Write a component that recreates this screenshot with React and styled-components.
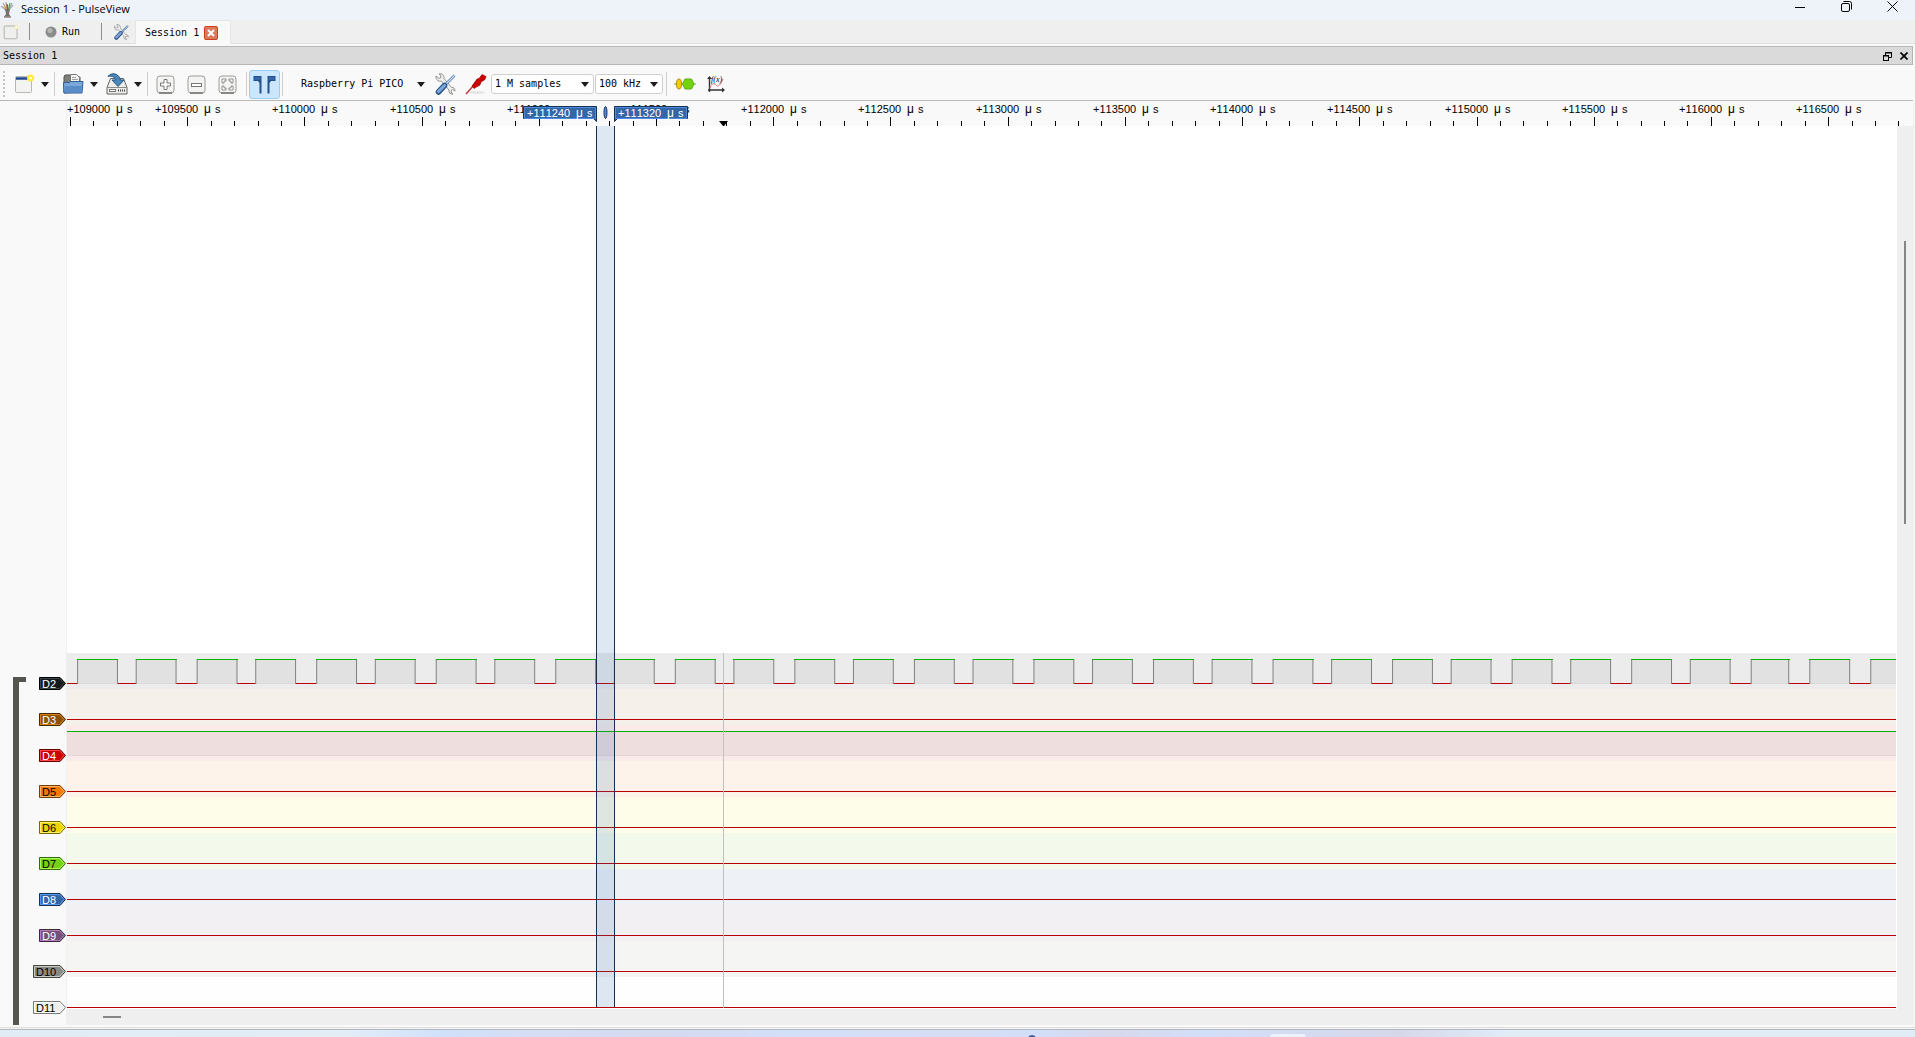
import styled, { createGlobalStyle } from "styled-components";

const GlobalStyle = createGlobalStyle`
    * {
        box-sizing: border-box;
    }
    body {
        margin: 0;
        background: #f9f9f9;
        color: #000;
        font: 10px/12px "DejaVu Sans Mono", "Liberation Mono", monospace;
    }
    button, select {
        font: inherit;
        color: inherit;
        border: 0;
        background: none;
        padding: 0;
        margin: 0;
    }
    svg {
        display: block;
        flex: none;
    }
`;

const Window = styled.div`
    display: flex;
    flex-direction: column;
    min-height: 100vh;
`;

const TitleBar = styled.header`
    display: flex;
    align-items: center;
    height: 20px;
    background: #eef3fa;
`;
const AppTitle = styled.h1`
    flex: 1;
    margin: 0;
    padding: 0 0 3px 5px;
    font: 11px/16px "Open Sans", "Noto Sans", sans-serif;
`;
const WindowButton = styled.button`
    display: flex;
    justify-content: center;
    width: 46px;
    height: 20px;
    padding-top: 1px;
`;

const TabBar = styled.div`
    display: flex;
    align-items: center;
    height: 24px;
    background: #efefef;
    border-bottom: 1px solid #dedede;
`;
const BarButton = styled.button`
    display: flex;
    align-items: center;
    justify-content: ${({ $start }) => ($start ? "flex-start" : "center")};
    gap: 5px;
    width: ${({ $width }) => $width}px;
    height: 23px;
    padding: 1px 0 0 ${({ $start }) => $start || 0}px;
`;
const BarLine = styled.span`
    width: 1px;
    height: 17px;
    background: #8c8c8c;
`;
const Tab = styled.div`
    display: flex;
    align-items: center;
    gap: 5px;
    height: 24px;
    padding: 1px 12px 0 9px;
    background: #f9f9f9;
    border: 1px solid #e6e6e6;
    border-bottom: 0;
`;
const TabClose = styled.button`
    display: flex;
    align-items: center;
    justify-content: center;
    width: 14px;
    height: 14px;
    border: 1px solid #d03c1c;
    border-radius: 2px;
    background: #dc7a5c;
`;

const DockTitle = styled.div`
    display: flex;
    align-items: center;
    gap: 8px;
    height: 19px;
    margin: 2px 2px 0 0;
    padding: 1px 4px 0 3px;
    background: #dadada;
    border: solid #b6b6b6;
    border-width: 1px 1px 1px 0;
`;
const DockName = styled.h2`
    flex: 1;
    margin: 0;
    font: inherit;
`;

const Toolbar = styled.div`
    display: flex;
    align-items: center;
    height: 36px;
    margin-right: 2px;
    padding: 3px 0 0 3px;
    border-bottom: 1px solid #b8b8b8;
`;
const Grip = styled.span`
    width: 2px;
    height: 26px;
    margin-right: 3px;
    background: repeating-linear-gradient(#c4c4c4 0 2px, transparent 2px 4px);
`;
const ToolLine = styled.span`
    width: 1px;
    height: 24px;
    margin: 0 2px;
    background: #cfcfcf;
`;
const MenuButton = styled.button`
    display: flex;
    align-items: center;
    gap: 5px;
    width: 44px;
    height: 30px;
    padding: 0 4px;
`;
const IconSlot = styled.span`
    display: flex;
    flex: none;
    justify-content: center;
    width: 24px;
`;
const ToolButton = styled.button`
    display: flex;
    align-items: center;
    justify-content: center;
    width: 31px;
    height: 29px;
    border: 1px solid ${({ $on }) => ($on ? "#99cef5" : "transparent")};
    border-radius: 3px;
    background: ${({ $on }) => ($on ? "#cce6fd" : "none")};
`;
const ToolGroup = styled.div`
    display: flex;
    margin-right: 1px;
`;
const DeviceButton = styled.button`
    display: flex;
    align-items: center;
    justify-content: space-between;
    width: 144px;
    height: 30px;
    padding: 0 4px 0 16px;
`;
const SelectBox = styled.div`
    display: grid;
    align-items: center;
    width: ${({ $width }) => $width}px;
    margin-right: 1px;
    > * {
        grid-area: 1 / 1;
    }
    > svg {
        justify-self: end;
        margin-right: 5px;
        pointer-events: none;
    }
`;
const Select = styled.select`
    appearance: none;
    height: 20px;
    padding-left: 3px;
    background: #fff;
    border: 1px solid #cfcfcf;
    border-radius: 3px;
`;

const Workspace = styled.main`
    display: flex;
    flex: 1;
    margin-right: 1px;
    border-right: 1px solid #f0f0f0;
`;
const HeaderPane = styled.div`
    display: flex;
    align-items: flex-end;
    width: 67px;
    padding-left: 13px;
    border-right: 1px solid #f0f0f0;
`;
const Group = styled.div`
    display: flex;
    flex: 1;
    justify-content: space-between;
`;
const Bracket = styled.div`
    width: 13px;
    margin-top: 24px;
    border: solid #555550;
    border-width: 5px 0 0 6px;
`;
const Labels = styled.div`
    padding-bottom: 16px;
`;
const LabelRow = styled.div`
    display: flex;
    justify-content: flex-end;
    height: ${({ $last }) => ($last ? 32 : 36)}px;
    padding-top: 24px;
`;
const LabelSvg = styled.svg`
    font: 11px "Liberation Sans", Arial, sans-serif;
`;
const ViewPane = styled.div`
    display: flex;
    flex-direction: column;
    flex: 1;
    min-width: 0;
`;
const RulerSvg = styled.svg`
    width: 100%;
    height: 25px;
    font: 11px "Liberation Sans", Arial, sans-serif;
    font-kerning: none;
`;
const Main = styled.div`
    display: flex;
    flex: 1;
`;
const Canvas = styled.div`
    position: relative;
    display: flex;
    flex: 1;
    flex-direction: column;
    justify-content: flex-end;
    min-width: 0;
    padding-right: 1px;
    background: #fff;
    overflow: hidden;
`;
const TraceRow = styled.div`
    height: ${({ $last }) => ($last ? 32 : 36)}px;
    padding-top: ${({ $high }) => ($high ? 6 : 30)}px;
    background: ${({ $bg }) => $bg};
`;
const Level = styled.div`
    height: ${({ $high }) => ($high ? 25 : 1)}px;
    background: ${({ $high }) => ($high ? "rgba(0, 0, 0, 0.05)" : "#b80000")};
    border-top: ${({ $high }) => ($high ? "1px solid #00b400" : "0")};
    border-bottom: ${({ $high }) => ($high ? "1px solid #e3d7d7" : "0")};
`;
const Wave = styled.svg`
    width: 100%;
    height: 25px;
`;
const CursorBand = styled.div`
    position: absolute;
    top: 0;
    bottom: 2px;
    left: 529px;
    width: 19px;
    background: rgba(52, 112, 180, 0.16);
    border: solid #17304f;
    border-width: 0 1px;
`;
const HoverLine = styled.div`
    position: absolute;
    bottom: 1px;
    left: 656px;
    width: 1px;
    height: 355px;
    background: #c0c0c0;
`;
const VScroll = styled.div`
    width: 16px;
    padding: 115px 7px 0;
    background: #efefef;
`;
const HScroll = styled.div`
    height: 16px;
    padding: 7px 0 0 36px;
    background: #efefef;
`;
const Thumb = styled.div`
    width: ${({ $vertical }) => ($vertical ? 2 : 18)}px;
    height: ${({ $vertical }) => ($vertical ? 283 : 2)}px;
    background: #858585;
`;

const StatusEdge = styled.div`
    height: 5px;
    border-bottom: 1px solid #b2b6be;
    background: linear-gradient(#f9f9f9 2px, #dedede 2px 3px, #f4f4f4 3px);
`;
const Taskbar = styled.footer`
    position: relative;
    height: 7px;
    overflow: hidden;
    background: linear-gradient(90deg, #e0edf7 0, #e2edf6 18%, #d0e1fb 23%, #d6def5 28%, #d4daf0 35%, #d3e0fa 41%, #d6def5 50%, #d2dffa 54%, #d7d9ec 58%, #d2dffa 63%, #d6d8ea 73%, #e0edf7 79%, #e0ecf6 100%);
`;
const TaskTile = styled.span`
    position: absolute;
    top: 4px;
    left: 66.3%;
    width: 36px;
    height: 10px;
    border-radius: 4px;
    background: #edf2fb;
`;
const TaskDot = styled.span`
    position: absolute;
    top: 5px;
    left: 53.7%;
    width: 8px;
    height: 8px;
    border-radius: 50%;
    background: #41639a;
`;

const channels = [
    { name: "D2", color: "#16191a", edge: "#000", light: "#3b4446", text: "#fff", bg: "#ececec", wave: true },
    { name: "D3", color: "#8f5202", edge: "#472901", light: "#d98213", text: "#fff", bg: "#f6f0ea" },
    { name: "D4", color: "#cc0000", edge: "#660000", light: "#ff4a4a", text: "#fff", bg: "#fbeaea", high: true },
    { name: "D5", color: "#f57900", edge: "#7a3c00", light: "#ffb469", text: "#000", bg: "#fef3ea" },
    { name: "D6", color: "#edd400", edge: "#766a00", light: "#fff46c", text: "#000", bg: "#fefdea" },
    { name: "D7", color: "#73d216", edge: "#39690b", light: "#a9ff55", text: "#000", bg: "#f3faec" },
    { name: "D8", color: "#3465a4", edge: "#1a3252", light: "#5599f5", text: "#fff", bg: "#eef2f7" },
    { name: "D9", color: "#75507b", edge: "#3a283d", light: "#b67dbf", text: "#fff", bg: "#f3f0f4" },
    { name: "D10", color: "#888a85", edge: "#444542", light: "#c6c8c2", text: "#000", bg: "#f5f5f4" },
    { name: "D11", color: "#eeeeec", edge: "#777776", light: "#fff", text: "#000", bg: "#fefefe" },
];

const SAMPLE = 2.344;
const TICK = 23.442;

// clock periods alternate between 25 and 26 samples
const pulses = [];
for (let i = 0, s = 0; i < 34; i++) {
    pulses.push({
        start: 10.6 + s * SAMPLE,
        end: 10.6 + (s + (i === 28 ? 16 : 17)) * SAMPLE,
    });
    s += i % 2 ? 26 : 25;
}

function DownArrow() {
    return (
        <svg width="8" height="5" viewBox="0 0 8 5">
            <path d="M0 0h8L4 5z" fill="#1c1c1c" />
        </svg>
    );
}

function LogoIcon() {
    return (
        <svg width="16" height="17" viewBox="0 0 16 17">
            <path d="M3 1l4 7M6 0l1 8M12 1L8 8M13 3L8 9M1 4l6 5" stroke="#a3a7b0" strokeWidth="1.2" />
            <path d="M7 2l1 7" stroke="#d43a2a" strokeWidth="1.4" />
            <path d="M10 1L8 9" stroke="#5aa84a" strokeWidth="1.2" />
            <path d="M4 4l3 4" stroke="#e0a030" strokeWidth="1.2" />
            <path d="M5 7h5l-1 5 2 3H4l2-3z" fill="#77706d" />
            <path d="M4 15h7" stroke="#9d8a80" strokeWidth="1.5" />
        </svg>
    );
}

function NewIcon({ size = 20, faded }) {
    return (
        <svg width={size} height={size} viewBox="0 0 20 20">
            <rect x="1.5" y="2.5" width="16" height="16" rx="1" fill={faded ? "#eff0ed" : "#f3f3f1"} stroke={faded ? "#a4a6a1" : "#b5b7b2"} />
            {!faded && <path d="M2 4.5h12" stroke="#1f4a8f" strokeWidth="2.5" />}
            <circle cx="16.5" cy="4" r={faded ? 2.5 : 3.5} fill={faded ? "#f3eda0" : "#fbe93a"} />
            <circle cx="16.5" cy="4" r="1.5" fill="#fffde0" />
        </svg>
    );
}

function OpenIcon() {
    return (
        <svg width="22" height="22" viewBox="0 0 22 22">
            <path d="M2 20V4l1-2h5l1 2h9v15z" fill="#7c7f7a" stroke="#4e504c" />
            <path d="M8.5 1.5h6l3 3V12h-9z" fill="#f2f2f0" stroke="#777" />
            <path d="M10 4.5h4M10 6.5h6M10 8.5h6" stroke="#a2a2a2" />
            <path d="M1.5 9.5h6l1-1h12.500l-1 11.500h-18z" fill="#7ba8da" stroke="#2f5f9f" />
            <path d="M3 13h17l-1 6H3z" fill="#5a8cc8" />
        </svg>
    );
}

function SaveIcon() {
    return (
        <svg width="24" height="22" viewBox="0 0 24 22">
            <path d="M5.5 5.5h13l3.5 9v6.5H2v-6.5z" fill="#ededeb" stroke="#62645f" />
            <path d="M2 14.5h20" stroke="#8b8d88" />
            <rect x="4.5" y="16.5" width="6" height="2" fill="#fff" stroke="#777" />
            <path d="M13 17.5h7" stroke="#444" strokeWidth="2" strokeDasharray="1 1" />
            <path d="M3 3.500C6-1 14 0 15.500 7H19l-6 6.500L7 7h3.500C10 4 6.500 2.500 3 3.500z" fill="#4a86b8" stroke="#255a86" />
        </svg>
    );
}

function ZoomIcon({ kind }) {
    return (
        <svg width="19" height="19" viewBox="0 0 19 19">
            <rect x="1" y="1" width="17" height="17" rx="3" fill="#f4f4f2" stroke="#9c9e99" />
            <path d="M3 18h13" stroke="#70726d" strokeWidth="1.5" />
            {kind === "in" && <path d="M8 4.5h3V8h3.5v3H11v3.5H8V11H4.5V8H8z" fill="#fff" stroke="#777974" />}
            {kind === "out" && <rect x="4.5" y="8.5" width="10" height="3" fill="#fff" stroke="#777974" />}
            {kind === "fit" && (
                <path
                    d="M4 8V4h4v2H6v2zM11 4h4v4h-2V6h-2zM15 11v4h-4v-2h2v-2zM8 15H4v-4h2v2h2z"
                    fill="#fff"
                    stroke="#777974"
                    strokeWidth="0.8"
                />
            )}
        </svg>
    );
}

function CursorsIcon() {
    return (
        <svg width="23" height="19" viewBox="0 0 23 19">
            <path d="M.5 1h8v17.500h-2V8L5 6H.5zM22.500 1h-8v17.500h2V8L18 6h4.500z" fill="#24508c" />
            <path d="M1.500 2h6v3h-6zM15.500 2h6v3h-6z" fill="#3465a4" />
        </svg>
    );
}

function ToolsIcon({ size = 22 }) {
    return (
        <svg width={size} height={size} viewBox="0 0 22 22">
            <path
                d="M2 3l3 2.5 2-1L6.5 2 5 1c3-1 5.500 1 5 4.500l7.500 9c2-.5 3.500 1 3.500 3.500l-2.500-1.500-1.500 1 .5 2.500 1.500 1c-3 .5-4.500-1.500-4-4L7.500 8C4 9 1.500 6.500 2 3z"
                fill="#f1f1ef"
                stroke="#858782"
                strokeWidth="0.9"
            />
            <path d="M20.5 2.500L11 12" stroke="#4f78ad" strokeWidth="2.6" />
            <path d="M20.5 2.500L11 12" stroke="#c9dbf0" strokeWidth="1.2" />
            <path d="M10.500 12.500L4.500 19" stroke="#2f568c" strokeWidth="5.6" strokeLinecap="round" />
            <path d="M10.500 12.500L4.500 18.500" stroke="#7fa8da" strokeWidth="3" strokeLinecap="round" />
        </svg>
    );
}

function ProbeIcon() {
    return (
        <svg width="22" height="22" viewBox="0 0 22 22">
            <ellipse cx="12" cy="19.5" rx="8" ry="1.5" fill="#e4e4e4" />
            <path d="M1 21l8-9" stroke="#c23a3a" strokeWidth="1.5" />
            <path d="M7 13l5-7 2-.5 3-4 4 2-1 3-4 2.500-1 3-6 3.500z" fill="#cc0000" stroke="#8f0000" strokeWidth="0.6" />
        </svg>
    );
}

function DecoderIcon() {
    return (
        <svg width="22" height="14" viewBox="0 0 22 14">
            <path d="M0 7h22" stroke="#73b01c" />
            <ellipse cx="5" cy="7" rx="2.5" ry="5" fill="#f2cf00" stroke="#b08c00" />
            <path d="M8.500 7l2.500-5h6.500L20 7l-2.500 5H11z" fill="#73d216" stroke="#5eae12" />
        </svg>
    );
}

function MathIcon() {
    return (
        <svg width="18" height="18" viewBox="0 0 18 18">
            <path d="M2.5 17V2M1 15h16" stroke="#333" strokeWidth="1.4" />
            <path d="M0 4l2.500-3L5 4zM15 12.500l3 2.500-3 2.500z" fill="#333" />
            <path d="M3 13c2-5 4-5 6-3s4 1 7-6" fill="none" stroke="#f07070" />
            <text x="4" y="7" fontSize="8" fontStyle="italic" fontFamily="Liberation Serif, serif">f(x)</text>
        </svg>
    );
}

function ChannelLabel({ channel }) {
    const width = channel.name.length > 2 ? 33 : 27;
    const tip = width - 6;
    return (
        <LabelSvg width={width} height="13" viewBox={`0 0 ${width} 13`}>
            <path d={`M.5 .5H${tip}L${width - 0.5} 6.5L${tip} 12.5H.5z`} fill={channel.color} stroke={channel.edge} />
            <path d={`M1.5 1.5H${tip - 0.5}L${width - 2} 6.5L${tip - 0.5} 11.5H1.5z`} fill="none" stroke={channel.light} />
            <text x="3" y="11" fill={channel.text}>{channel.name}</text>
        </LabelSvg>
    );
}

function TimeText({ x, y, value, fill }) {
    return (
        <text x={x} y={y} fill={fill}>
            +{value}
            <tspan x={x + 49} fontSize="12">μ</tspan>
            <tspan x={x + 60}>s</tspan>
        </text>
    );
}

function Ruler() {
    const ticks = Array.from({ length: 79 }, (_, i) => i);
    return (
        <RulerSvg role="img" aria-label="Time ruler">
            <g shapeRendering="crispEdges">
                {ticks.map((i) => (
                    <rect key={i} x={Math.round(3 + i * TICK)} y={i % 5 ? 20 : 16} width="1" height="9" />
                ))}
            </g>
            {ticks.filter((i) => i % 5 === 0).map((i) => (
                <TimeText key={i} x={Math.max(0, Math.round(3 + i * TICK) - 32)} y={12} value={109000 + i * 100} />
            ))}
            <path d="M652 20h9l-4 5h-1z" />
            <path d="M456.5 5.5h73v15l-3-3h-70z" fill="#3465a4" stroke="#1a3252" />
            <path d="M457.5 6.5h71v11h-71z" fill="none" stroke="#4d8ae0" />
            <path d="M547.5 5.5h73v12h-70l-3 3z" fill="#3465a4" stroke="#1a3252" />
            <path d="M548.5 6.5h71v11h-71z" fill="none" stroke="#4d8ae0" />
            <ellipse cx="538.5" cy="11.5" rx="1.5" ry="6" fill="#4d8ae0" stroke="#1a3252" />
            <TimeText x={460} y={16} value={111240} fill="#fff" />
            <TimeText x={551} y={16} value={111320} fill="#fff" />
        </RulerSvg>
    );
}

function ClockWave() {
    return (
        <Wave role="img" aria-label="D2 signal">
            <rect y="24" width="100%" height="1" fill="#b80000" />
            {pulses.map(({ start, end }) => (
                <g key={start}>
                    <rect x={start} y="0" width={end - start} height="25" fill="#e1e1e1" />
                    <rect x={start} y="24" width={end - start} height="1" fill="#dadada" />
                    <path d={`M${start} 0V25M${end} 0V25`} stroke="#808080" />
                    <rect x={Math.floor(start)} width={Math.round(end - start) + 1} height="1" fill="#00b400" />
                </g>
            ))}
        </Wave>
    );
}

function Trace({ channel, last }) {
    return (
        <TraceRow $bg={channel.bg} $high={channel.high || channel.wave} $last={last}>
            {channel.wave ? <ClockWave /> : <Level $high={channel.high} />}
        </TraceRow>
    );
}

export default function App() {
    return (
        <>
            <GlobalStyle />
            <Window>
                <TitleBar>
                    <LogoIcon />
                    <AppTitle>Session 1 - PulseView</AppTitle>
                    <WindowButton aria-label="Minimize">
                        <svg width="11" height="11"><path d="M0 6.5h10" stroke="#000" /></svg>
                    </WindowButton>
                    <WindowButton aria-label="Restore">
                        <svg width="11" height="11" fill="none" stroke="#000">
                            <rect x="0.5" y="2.5" width="8" height="8" rx="1.5" />
                            <path d="M2.5 .5h6a2 2 0 0 1 2 2v6" />
                        </svg>
                    </WindowButton>
                    <WindowButton aria-label="Close window">
                        <svg width="11" height="11"><path d="M.5 .5l10 10M10.5 .5l-10 10" stroke="#000" /></svg>
                    </WindowButton>
                </TitleBar>

                <TabBar>
                    <BarButton $width={29} $start={3} aria-label="New session"><NewIcon size={16} faded /></BarButton>
                    <BarLine />
                    <BarButton $width={71} $start={15}>
                        <svg width="12" height="12" viewBox="0 0 12 12">
                            <circle cx="6" cy="6" r="5.5" fill="#8b8d8a" />
                            <circle cx="5" cy="4.5" r="2.5" fill="#b4b6b2" />
                        </svg>
                        Run
                    </BarButton>
                    <BarLine />
                    <BarButton $width={33} $start={11} aria-label="Settings"><ToolsIcon size={16} /></BarButton>
                    <Tab>
                        Session 1
                        <TabClose aria-label="Close Session 1">
                            <svg width="8" height="8"><path d="M1 1l6 6M7 1L1 7" stroke="#fff" strokeWidth="2" /></svg>
                        </TabClose>
                    </Tab>
                </TabBar>

                <DockTitle>
                    <DockName>Session 1</DockName>
                    <button aria-label="Float">
                        <svg width="9" height="9" fill="none" stroke="#000">
                            <path d="M2.5 3V.5h6v5H6M2 1h7M0 4h6" />
                            <rect x="0.5" y="3.5" width="5" height="5" />
                        </svg>
                    </button>
                    <button aria-label="Close dock">
                        <svg width="8" height="8"><path d="M.5 .5l7 7M7.5 .5l-7 7" stroke="#000" strokeWidth="1.7" /></svg>
                    </button>
                </DockTitle>

                <Toolbar role="toolbar">
                    <Grip />
                    <MenuButton aria-label="New view"><IconSlot><NewIcon /></IconSlot><DownArrow /></MenuButton>
                    <ToolLine />
                    <MenuButton aria-label="Open"><IconSlot><OpenIcon /></IconSlot><DownArrow /></MenuButton>
                    <MenuButton aria-label="Save"><IconSlot><SaveIcon /></IconSlot><DownArrow /></MenuButton>
                    <ToolLine />
                    <ToolGroup>
                        <ToolButton aria-label="Zoom in"><ZoomIcon kind="in" /></ToolButton>
                        <ToolButton aria-label="Zoom out"><ZoomIcon kind="out" /></ToolButton>
                        <ToolButton aria-label="Zoom to fit"><ZoomIcon kind="fit" /></ToolButton>
                    </ToolGroup>
                    <ToolLine />
                    <ToolButton $on aria-pressed="true" aria-label="Show cursors"><CursorsIcon /></ToolButton>
                    <ToolLine />
                    <DeviceButton>Raspberry Pi PICO<DownArrow /></DeviceButton>
                    <ToolButton aria-label="Configure device"><ToolsIcon /></ToolButton>
                    <ToolButton aria-label="Configure channels"><ProbeIcon /></ToolButton>
                    <SelectBox $width={103}>
                        <Select aria-label="Sample count"><option>1 M samples</option></Select>
                        <DownArrow />
                    </SelectBox>
                    <SelectBox $width={68}>
                        <Select aria-label="Sample rate"><option>100 kHz</option></Select>
                        <DownArrow />
                    </SelectBox>
                    <ToolLine />
                    <ToolButton aria-label="Add protocol decoder"><DecoderIcon /></ToolButton>
                    <ToolButton aria-label="Add math signal"><MathIcon /></ToolButton>
                </Toolbar>

                <Workspace>
                    <HeaderPane>
                        <Group>
                            <Bracket />
                            <Labels>
                                {channels.map((channel, i) => (
                                    <LabelRow key={channel.name} $last={i === channels.length - 1}>
                                        <ChannelLabel channel={channel} />
                                    </LabelRow>
                                ))}
                            </Labels>
                        </Group>
                    </HeaderPane>
                    <ViewPane>
                        <Ruler />
                        <Main>
                            <Canvas>
                                {channels.map((channel, i) => (
                                    <Trace key={channel.name} channel={channel} last={i === channels.length - 1} />
                                ))}
                                <HoverLine />
                                <CursorBand />
                            </Canvas>
                            <VScroll><Thumb $vertical /></VScroll>
                        </Main>
                        <HScroll><Thumb /></HScroll>
                    </ViewPane>
                </Workspace>

                <StatusEdge />
                <Taskbar>
                    <TaskDot />
                    <TaskTile />
                </Taskbar>
            </Window>
        </>
    );
}
